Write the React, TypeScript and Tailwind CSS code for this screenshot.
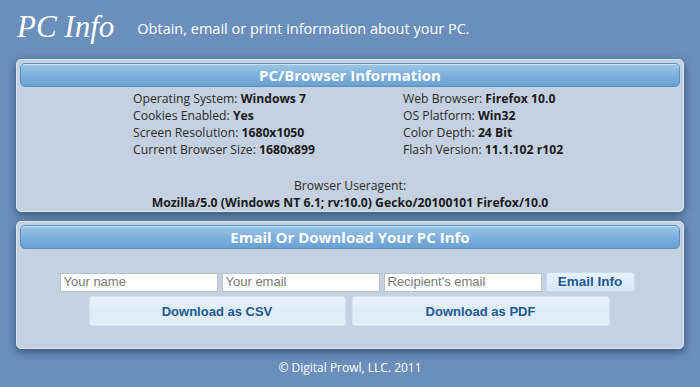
import React from "react";

const leftRows = [
    ["Operating System", "Windows 7"],
    ["Cookies Enabled", "Yes"],
    ["Screen Resolution", "1680x1050"],
    ["Current Browser Size", "1680x899"],
];

const rightRows = [
    ["Web Browser", "Firefox 10.0"],
    ["OS Platform", "Win32"],
    ["Color Depth", "24 Bit"],
    ["Flash Version", "11.1.102 r102"],
];

function BarTitle({ children }: { children: React.ReactNode }) {
    return (
        <div className="mx-[3px] mt-[3px] h-[24px] rounded-[5px] border border-[#5a8fc0] bg-gradient-to-b from-[#9cc6e8] via-[#7fb1dd] to-[#6aa0d0] flex items-center justify-center shadow-[inset_0_1px_0_rgba(255,255,255,0.5)]">
            <span className="text-white font-bold text-[15px] leading-none">{children}</span>
        </div>
    );
}

export default function App() {
    const sans = { fontFamily: '"Open Sans", "DejaVu Sans", sans-serif' };
    const arial = { fontFamily: '"Liberation Sans", Arial, sans-serif' };

    return (
        <div className="w-[700px] h-[387px] bg-[#6a8fba] overflow-hidden" style={sans}>
            {/* Header */}
            <div className="flex items-end h-[54px] pl-[17px] pb-[12px]">
                <h1
                    className="text-white italic text-[31px] leading-none"
                    style={{ fontFamily: '"Liberation Serif", "Times New Roman", serif' }}
                >
                    PC Info
                </h1>
                <p className="text-white text-[14.5px] ml-[23px] mb-[6px] leading-none">
                    Obtain, email or print information about your PC.
                </p>
            </div>

            {/* PC/Browser Information */}
            <div className="mx-[16px] mt-[5px] h-[153px] rounded-[5px] bg-[#c3d1e1] border border-[#dde6ef] shadow-[0_3px_8px_rgba(20,40,70,0.6)]">
                <BarTitle>PC/Browser Information</BarTitle>
                <div className="flex mt-[3px] text-[12.2px] leading-[17px] text-[#2b2b2b]">
                    <div className="pl-[116px] w-[386px]">
                        {leftRows.map(([k, v]) => (
                            <div key={k}>
                                {k}: <span className="font-bold text-[#1a1a1a]">{v}</span>
                            </div>
                        ))}
                    </div>
                    <div>
                        {rightRows.map(([k, v]) => (
                            <div key={k}>
                                {k}: <span className="font-bold text-[#1a1a1a]">{v}</span>
                            </div>
                        ))}
                    </div>
                </div>
                <div className="mt-[19px] text-center text-[12.2px] leading-[17px] text-[#2b2b2b]">
                    <div>Browser Useragent:</div>
                    <div className="font-bold text-[#1a1a1a]">
                        Mozilla/5.0 (Windows NT 6.1; rv:10.0) Gecko/20100101 Firefox/10.0
                    </div>
                </div>
            </div>

            {/* Email / Download */}
            <div className="mx-[16px] mt-[9px] h-[128px] rounded-[5px] bg-[#c3d1e1] border border-[#dde6ef] shadow-[0_3px_8px_rgba(20,40,70,0.6)]">
                <BarTitle>Email Or Download Your PC Info</BarTitle>
                <div className="flex justify-center items-center gap-[4px] mt-[23px] pr-[6px]" style={arial}>
                    <input
                        className="w-[158px] h-[19px] bg-white border border-[#b9c3cc] px-[3px] text-[13px] placeholder:text-[#7a7a7a] outline-none"
                        placeholder="Your name"
                    />
                    <input
                        className="w-[158px] h-[19px] bg-white border border-[#b9c3cc] px-[3px] text-[13px] placeholder:text-[#7a7a7a] outline-none"
                        placeholder="Your email"
                    />
                    <input
                        className="w-[158px] h-[19px] bg-white border border-[#b9c3cc] px-[3px] text-[13px] placeholder:text-[#7a7a7a] outline-none"
                        placeholder="Recipient's email"
                    />
                    <button className="w-[89px] h-[20px] rounded-[3px] bg-gradient-to-b from-[#e6f1fb] to-[#d7e7f6] border border-[#c9dcef] text-[#22598f] font-bold text-[13.5px] leading-none">
                        Email Info
                    </button>
                </div>
                <div className="flex justify-center gap-[6px] mt-[4px] pr-[2px]" style={arial}>
                    <button className="w-[257px] h-[30px] rounded-[3px] bg-gradient-to-b from-[#e8f2fb] via-[#deecf8] to-[#e3effa] border border-[#d2e2f2] text-[#22598f] font-bold text-[13px] leading-none">
                        Download as CSV
                    </button>
                    <button className="w-[258px] h-[30px] rounded-[3px] bg-gradient-to-b from-[#e8f2fb] via-[#deecf8] to-[#e3effa] border border-[#d2e2f2] text-[#22598f] font-bold text-[13px] leading-none">
                        Download as PDF
                    </button>
                </div>
            </div>

            {/* Footer */}
            <div className="text-center text-white text-[12px] mt-[10px]">
                © Digital Prowl, LLC. 2011
            </div>
        </div>
    );
}
